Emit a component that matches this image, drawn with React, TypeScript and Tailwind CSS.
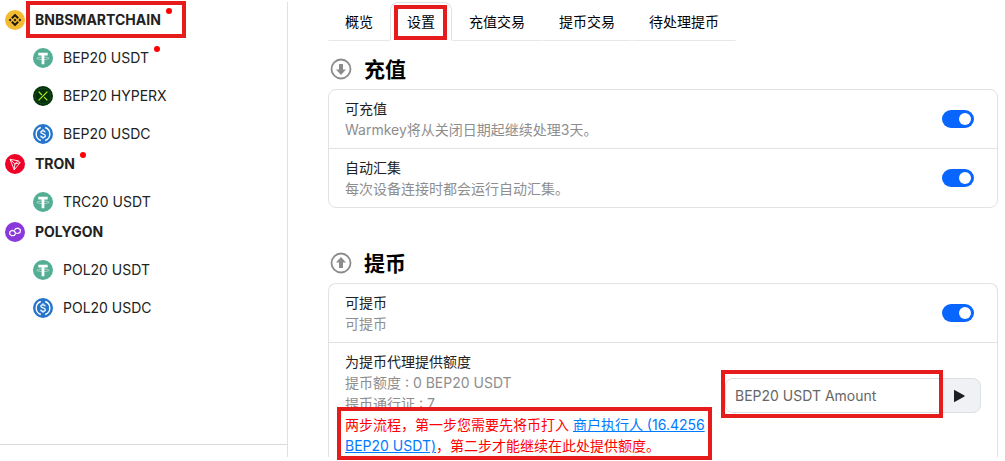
import React, { useState } from 'react';

type CoinName = 'bnb' | 'usdt' | 'hyperx' | 'usdc' | 'tron' | 'polygon';

interface Token {
  name: string;
  icon: CoinName;
  alert?: boolean;
}

interface Chain extends Token {
  tokens: Token[];
}

const chains: Chain[] = [
  {
    name: 'BNBSMARTCHAIN',
    icon: 'bnb',
    alert: true,
    tokens: [
      { name: 'BEP20 USDT', icon: 'usdt', alert: true },
      { name: 'BEP20 HYPERX', icon: 'hyperx' },
      { name: 'BEP20 USDC', icon: 'usdc' },
    ],
  },
  {
    name: 'TRON',
    icon: 'tron',
    alert: true,
    tokens: [{ name: 'TRC20 USDT', icon: 'usdt' }],
  },
  {
    name: 'POLYGON',
    icon: 'polygon',
    tokens: [
      { name: 'POL20 USDT', icon: 'usdt' },
      { name: 'POL20 USDC', icon: 'usdc' },
    ],
  },
];

const tabs = ['概览', '设置', '充值交易', '提币交易', '待处理提币'];

const CoinIcon: React.FC<{ name: CoinName }> = ({ name }) => (
  <svg className="w-5 h-5 shrink-0" viewBox="0 0 32 32" fill="none" aria-hidden="true">
    {name === 'bnb' && (
      <>
        <circle cx="16" cy="16" r="16" fill="#F3BA2F" />
        <path
          fill="#1c1a10"
          d="M12.1 14.4L16 10.5l3.9 3.9 2.3-2.3L16 6l-6.2 6.1 2.3 2.3zM6 16l2.3-2.3 2.2 2.3-2.2 2.3L6 16zm6.1 1.6l3.9 3.9 3.9-3.9 2.3 2.3L16 26l-6.2-6.1 2.3-2.3zM21.5 16l2.2-2.3L26 16l-2.3 2.3-2.2-2.3zm-3.2 0L16 18.3 13.7 16l2.3-2.3 2.3 2.3z"
        />
      </>
    )}
    {name === 'usdt' && (
      <>
        <circle cx="16" cy="16" r="16" fill="#53AE94" />
        <path fill="#fff" d="M8.5 7.500h15v4.300h-5.300v14h-4.400v-14H8.500V7.500z" />
        <ellipse cx="16" cy="16.500" rx="9.800" ry="2" stroke="#fff" strokeOpacity=".75" strokeWidth="1" />
      </>
    )}
    {name === 'hyperx' && (
      <>
        <circle cx="16" cy="16" r="16" fill="#06300c" />
        <circle cx="16" cy="16" r="12.500" stroke="#0f4d17" strokeWidth="1.500" />
        <path d="M9 9l5.200 5.400M23 9L9 23M17.800 17.800L23 23" stroke="#a4e41c" strokeWidth="2.200" />
      </>
    )}
    {name === 'usdc' && (
      <>
        <circle cx="16" cy="16" r="16" fill="#2775CA" />
        <path
          d="M12.500 5.600a11 11 0 0 0 0 20.800M19.500 5.600a11 11 0 0 1 0 20.800"
          stroke="#fff"
          strokeWidth="2.200"
        />
        <path
          d="M19.600 13.300c-.2-1.600-1.500-2.400-3.600-2.400s-3.500.9-3.500 2.400c0 3.600 7.200 1.700 7.200 5.300 0 1.600-1.500 2.600-3.700 2.600s-3.600-.9-3.800-2.700M16 8.500v2.400M16 21.200v2.400"
          stroke="#fff"
          strokeWidth="2"
        />
      </>
    )}
    {name === 'tron' && (
      <>
        <circle cx="16" cy="16" r="16" fill="#EF0027" />
        <path
          d="M8 8.500l12.800 2.300 3.400 3-9.400 11.400L8 8.500zm0 0l7.800 7.400m0 0l5-5.100m-5 5.100l8.400-2.100m-8.400 2.100l-1 9.300"
          stroke="#fff"
          strokeWidth="1.400"
          strokeLinejoin="round"
        />
      </>
    )}
    {name === 'polygon' && (
      <>
        <circle cx="16" cy="16" r="16" fill="#8A37DB" />
        <path
          d="M16.800 18.600l-1.900 2.700-4.200.6-3.300-2.500.5-4.200 3.700-1.800 3.300 1.300 2.200 2.900 3.300.800 3.700-1.800.500-4.200-3.300-2.500-4.200.600-1.900 2.700"
          stroke="#fff"
          strokeWidth="2"
          strokeLinejoin="round"
        />
      </>
    )}
  </svg>
);

const AlertDot = () => <span className="self-start mt-[3px] ml-[5px] w-1.5 h-1.5 rounded-full bg-[#ff0000]" />;

// red frame drawn round the part of the page the guide talks about
const Marker: React.FC<{ className: string }> = ({ className }) => (
  <span className={`absolute border-4 border-[#e61c1c] pointer-events-none ${className}`} />
);

const Sidebar = () => (
  <aside className="w-72 shrink-0 flex flex-col border-r border-[#e0e0e0] pt-[3px]">
    <nav className="pl-[5px] text-[#222]">
      {chains.map((chain) => (
        <div key={chain.name}>
          <div className="relative flex items-center h-[30px]">
            <CoinIcon name={chain.icon} />
            <a href="#" className="ml-2.5 pb-0.5 font-bold">{chain.name}</a>
            {chain.alert && <AlertDot />}
            {chain.icon === 'bnb' && <Marker className="left-[21px] -top-1 w-40 h-[37px]" />}
          </div>
          <ul className="pl-7">
            {chain.tokens.map((token) => (
              <li key={token.name} className="flex items-center h-[30px] mt-2">
                <CoinIcon name={token.icon} />
                <a href="#" className="ml-2.5 pb-0.5">{token.name}</a>
                {token.alert && <AlertDot />}
              </li>
            ))}
          </ul>
        </div>
      ))}
    </nav>
    <div className="mt-auto h-[13px] border-t border-[#d8dcdc]" />
  </aside>
);

const SectionTitle: React.FC<{ title: string; up?: boolean }> = ({ title, up }) => (
  <h2 className="flex items-center h-[38px] pl-0.5 pb-0.5 text-[21px] font-bold text-black">
    <svg className="w-[22px] h-[22px] mr-3" viewBox="0 0 22 22" fill="none" aria-hidden="true">
      <circle cx="11" cy="11" r="9.500" stroke="#8c8c8c" strokeWidth="1.800" />
      {up ? (
        <path fill="#8c8c8c" d="M11 5l5 5.600h-3v5.400H9v-5.400H6L11 5z" />
      ) : (
        <path fill="#8c8c8c" d="M11 17l-5-5.600h3V6h4v5.400h3L11 17z" />
      )}
    </svg>
    {title}
  </h2>
);

const SwitchRow: React.FC<{ id: string; label: string; hint: string }> = ({ id, label, hint }) => {
  const [on, setOn] = useState(true);

  return (
    <div className="flex items-center justify-between py-2 pl-4 pr-[23px]">
      <div>
        <label htmlFor={id} className="block">{label}</label>
        <p className="text-[#8e8e8e]">{hint}</p>
      </div>
      <input
        id={id}
        type="checkbox"
        role="switch"
        checked={on}
        onChange={(e) => setOn(e.target.checked)}
        className="appearance-none shrink-0 flex items-center w-8 h-[18px] px-[3px] rounded-full bg-gray-300 checked:bg-[#0866ff] checked:justify-end before:w-3 before:h-3 before:rounded-full before:bg-white"
      />
    </div>
  );
};

export default function App() {
  const [active, setActive] = useState('设置');
  const [amount, setAmount] = useState('');

  return (
    <div className="flex pt-0.5 pb-1 bg-white text-sm leading-[21px] text-[#212121] font-[Inter,'Noto_Sans_CJK_SC',sans-serif]">
      <Sidebar />

      <main className="flex-1 min-w-0 pl-10 pr-[7px]">
        <div role="tablist" className="flex text-black">
          {tabs.map((tab) => (
            <button
              key={tab}
              role="tab"
              aria-selected={tab === active}
              onClick={() => setActive(tab)}
              className={
                tab === active
                  ? 'relative h-[39px] px-4 border border-b-transparent border-[#e2e2e2] rounded-t-lg'
                  : 'relative h-[39px] px-4 border border-transparent border-b-[#e8e8e8]'
              }
            >
              {tab}
              {tab === '设置' && <Marker className="left-[3px] top-0.5 w-[53px] h-[35px]" />}
            </button>
          ))}
        </div>

        <section className="mt-2.5">
          <SectionTitle title="充值" />
          <div className="border border-[#e2e2e2] rounded-lg divide-y divide-[#e2e2e2]">
            <SwitchRow id="deposit" label="可充值" hint="Warmkey将从关闭日期起继续处理3天。" />
            <SwitchRow id="collect" label="自动汇集" hint="每次设备连接时都会运行自动汇集。" />
          </div>
        </section>

        <section className="mt-[37px]">
          <SectionTitle title="提币" up />
          <div className="border border-b-0 border-[#e2e2e2] rounded-t-lg divide-y divide-[#e2e2e2]">
            <SwitchRow id="withdraw" label="可提币" hint="可提币" />

            <div className="flex items-start gap-4 pt-2 pb-px px-4">
              <div className="flex-1">
                <label htmlFor="amount" className="block">为提币代理提供额度</label>
                <p className="text-[#8e8e8e]">提币额度 : 0 BEP20 USDT</p>
                <p className="text-[#8e8e8e]">提币通行证 : 7</p>
                <p className="relative text-[#ff0000]">
                  两步流程，第一步您需要先将币打入{' '}
                  <a href="#" className="text-[#007bff] underline">商户执行人 (16.4256 BEP20 USDT)</a>
                  ，第二步才能继续在此处提供额度。
                  <Marker className="-left-2 -right-[3px] -top-[7px] h-[53px]" />
                </p>
              </div>

              <div className="relative flex w-64 h-[35px] mt-[27px]">
                <input
                  id="amount"
                  type="text"
                  value={amount}
                  onChange={(e) => setAmount(e.target.value)}
                  placeholder="BEP20 USDT Amount"
                  className="flex-1 min-w-0 px-[9px] border border-[#dcdfe3] rounded-l-lg placeholder:text-[#666]"
                />
                <button
                  aria-label="提交"
                  className="flex items-center justify-center w-[42px] -ml-px pr-0.5 border border-[#dcdfe3] rounded-r-lg bg-[#f0f1f4]"
                >
                  <svg className="w-3 h-3.5" viewBox="0 0 12 14" fill="#1c1f23">
                    <path d="M1 .8v12.400L11.500 7.600v-1.200L1 .8z" />
                  </svg>
                </button>
                <Marker className="-left-1 right-[38px] -top-2 h-12" />
              </div>
            </div>
          </div>
        </section>
      </main>
    </div>
  );
}
